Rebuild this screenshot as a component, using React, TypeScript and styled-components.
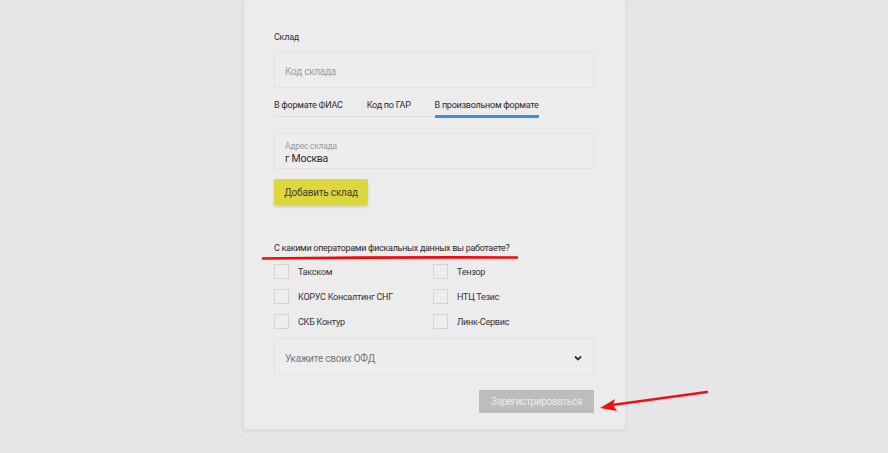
import React, { useState } from 'react'
import styled, { createGlobalStyle } from 'styled-components'

const GlobalStyle = createGlobalStyle`
    html, body {
        margin: 0;
        padding: 0;
        background: #e6e6e8;
        font-family: Roboto, 'Open Sans', sans-serif;
        letter-spacing: -0.25px;
        color: #2b2b2b;
    }
`

const Page = styled.div`
    position: relative;
    width: 888px;
    height: 453px;
    overflow: hidden;
    padding-left: 243px;
    box-sizing: border-box;
`

const Card = styled.div`
    width: 383px;
    height: 430px;
    box-sizing: border-box;
    background: #ececec;
    border: 1px solid #dedede;
    border-top: none;
    box-shadow: 0 1px 3px rgba(0, 0, 0, 0.08);
    padding: 30px 31px 0 30px;
    display: flex;
    flex-direction: column;
`

const Label = styled.div`
    font-size: 9px;
    line-height: 14px;
    color: #2f2f2f;
    margin-bottom: 8px;
`

const Field = styled.div`
    height: 36px;
    box-sizing: border-box;
    border: 1px solid #e2e2e2;
    background: #ededed;
    padding: 3px 10px 0;
    display: flex;
    flex-direction: column;
    justify-content: center;
    position: relative;
`

const Placeholder = styled.span<{ $dark?: boolean }>`
    font-size: 10px;
    color: ${p => (p.$dark ? '#787878' : '#9c9c9c')};
`

const SmallLabel = styled.span`
    font-size: 8.5px;
    line-height: 11px;
    color: #9a9a9a;
`

const Value = styled.span`
    font-size: 10.5px;
    line-height: 13px;
    color: #2b2b2b;
`

const Tabs = styled.div`
    display: flex;
    align-self: flex-start;
    margin-top: 10px;
    margin-bottom: 16px;
    border-bottom: 1px solid #dcdcdc;
`

const Tab = styled.div<{ $active?: boolean }>`
    font-size: 9px;
    line-height: 14px;
    padding-bottom: 3px;
    margin-right: ${p => (p.$active ? '0' : '24px')};
    color: #2b2b2b;
    border-bottom: 3px solid ${p => (p.$active ? '#3d8fd6' : 'transparent')};
    margin-bottom: -2px;
    white-space: nowrap;
`

const YellowButton = styled.button`
    align-self: flex-start;
    margin-top: 10px;
    height: 26px;
    width: 94px;
    border: none;
    border-radius: 2px;
    background: #dcd73d;
    box-shadow: 0 2px 3px rgba(0, 0, 0, 0.15);
    font-family: inherit;
    letter-spacing: -0.2px;
    font-size: 10px;
    color: #3f3f2a;
    padding: 0;
`

const Question = styled.div`
    margin-top: 36px;
    font-size: 9px;
    line-height: 14px;
    letter-spacing: -0.3px;
    color: #2b2b2b;
`

const CheckGrid = styled.div`
    display: grid;
    grid-template-columns: 159px 1fr;
    grid-auto-rows: 25px;
    margin-top: 4px;
`

const CheckItem = styled.label`
    display: flex;
    align-items: center;
    gap: 9px;
    font-size: 9px;
    color: #333;
`

const Box = styled.span<{ $checked: boolean }>`
    width: 15px;
    height: 15px;
    box-sizing: border-box;
    border: 1px solid #d4d4d4;
    background: ${p => (p.$checked ? '#dcd73d' : '#ededed')};
`

const SelectField = styled(Field)`
    margin-top: 4px;
    height: 37px;
    flex-direction: row;
    align-items: center;
    justify-content: space-between;
`

const Chevron = styled.svg`
    width: 8px;
    height: 6px;
    margin-right: 1px;
`

const Footer = styled.div`
    display: flex;
    justify-content: flex-end;
    margin-top: 15px;
`

const SubmitButton = styled.button`
    width: 115px;
    height: 23px;
    border: none;
    background: #bdbdbd;
    color: #ececec;
    font-family: inherit;
    letter-spacing: -0.35px;
    font-size: 10px;
    padding: 0;
`

const Overlay = styled.svg`
    position: absolute;
    left: 0;
    top: 0;
    width: 888px;
    height: 453px;
    pointer-events: none;
`

const operators = ['Такском', 'Тензор', 'КОРУС Консалтинг СНГ', 'НТЦ Тезис', 'СКБ Контур', 'Линк-Сервис']

export default function App() {
    const [checked, setChecked] = useState<Record<string, boolean>>({})

    return (
        <Page>
            <GlobalStyle />
            <Card>
                <Label>Склад</Label>
                <Field>
                    <Placeholder>Код склада</Placeholder>
                </Field>
                <Tabs>
                    <Tab>В формате ФИАС</Tab>
                    <Tab>Код по ГАР</Tab>
                    <Tab $active>В произвольном формате</Tab>
                </Tabs>
                <Field>
                    <SmallLabel>Адрес склада</SmallLabel>
                    <Value>г Москва</Value>
                </Field>
                <YellowButton>Добавить склад</YellowButton>
                <Question>С какими операторами фискальных данных вы работаете?</Question>
                <CheckGrid>
                    {operators.map(name => (
                        <CheckItem key={name} onClick={() => setChecked({ ...checked, [name]: !checked[name] })}>
                            <Box $checked={!!checked[name]} />
                            {name}
                        </CheckItem>
                    ))}
                </CheckGrid>
                <SelectField>
                    <Placeholder $dark>Укажите своих ОФД</Placeholder>
                    <Chevron viewBox="0 0 8 6">
                        <path d="M1 1.5 L4 4.5 L7 1.5" fill="none" stroke="#333" strokeWidth="1.8" />
                    </Chevron>
                </SelectField>
                <Footer>
                    <SubmitButton>Зарегистрироваться</SubmitButton>
                </Footer>
            </Card>
            <Overlay viewBox="0 0 888 453">
                <path d="M263 258.5 Q390 257 517 257.5" stroke="#f20a0a" strokeWidth="2.6" fill="none" strokeLinecap="round" />
                <path d="M707 392 L612 405" stroke="#ee1111" strokeWidth="2.4" fill="none" strokeLinecap="round" />
                <path d="M600 408 L615 399 L613 405 L617 411 Z" fill="#ee1111" />
            </Overlay>
        </Page>
    )
}
